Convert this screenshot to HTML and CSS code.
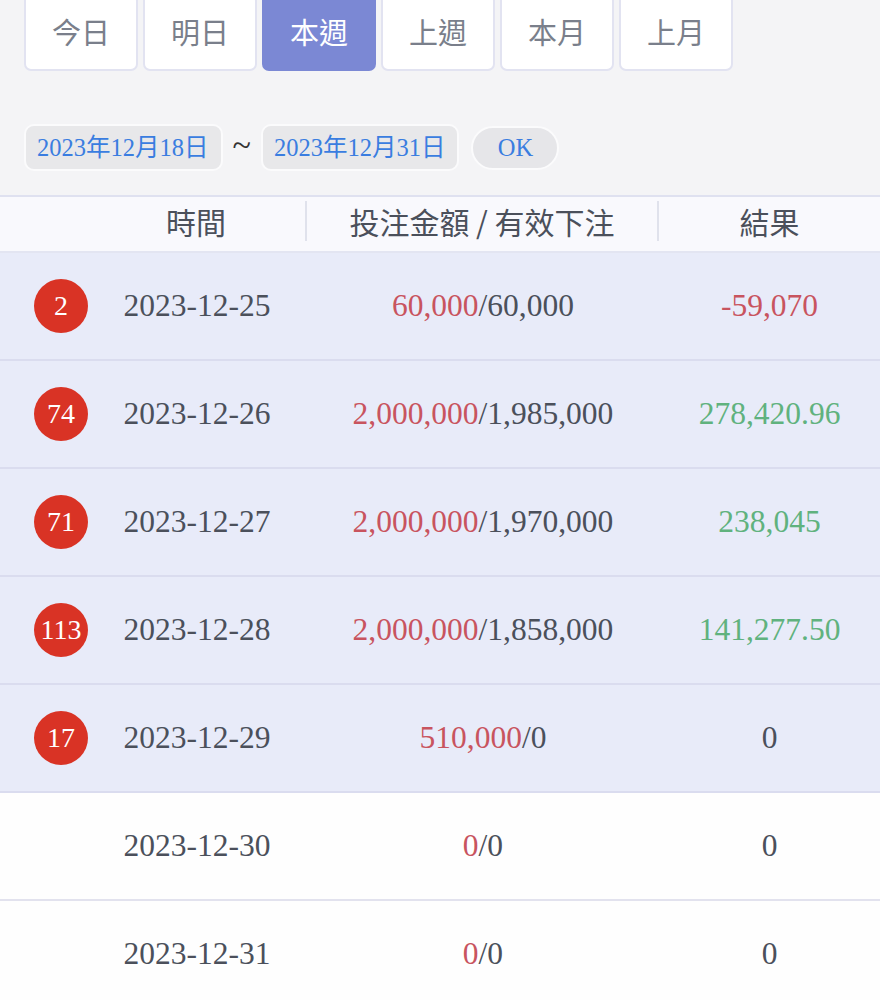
FILE: index.html
```html
<!DOCTYPE html>
<html lang="zh-TW">
<head>
    <meta charset="UTF-8">
    <meta name="viewport" content="width=device-width, initial-scale=1.0">
    <title>投注記錄</title>
    <link rel="stylesheet" href="styles.css">
</head>
<body>
    <div class="filter-panel">
        <div class="tab-bar">
            <button class="tab">今日</button>
            <button class="tab">明日</button>
            <button class="tab active">本週</button>
            <button class="tab">上週</button>
            <button class="tab">本月</button>
            <button class="tab">上月</button>
        </div>

        <div class="date-range">
            <span class="date-chip">2023年12月18日</span>
            <span class="tilde">~</span>
            <span class="date-chip">2023年12月31日</span>
            <button class="ok-button">OK</button>
        </div>
    </div>

    <div class="record-table">
        <div class="table-head">
            <div class="cell"></div>
            <div class="cell head-cell sep">時間</div>
            <div class="cell head-cell sep">投注金額 / 有效下注</div>
            <div class="cell head-cell">結果</div>
        </div>

        <div class="table-row filled">
            <div class="cell"><span class="badge">2</span></div>
            <div class="cell">2023-12-25</div>
            <div class="cell"><span class="red">60,000</span>/60,000</div>
            <div class="cell red">-59,070</div>
        </div>
        <div class="table-row filled">
            <div class="cell"><span class="badge">74</span></div>
            <div class="cell">2023-12-26</div>
            <div class="cell"><span class="red">2,000,000</span>/1,985,000</div>
            <div class="cell green">278,420.96</div>
        </div>
        <div class="table-row filled">
            <div class="cell"><span class="badge">71</span></div>
            <div class="cell">2023-12-27</div>
            <div class="cell"><span class="red">2,000,000</span>/1,970,000</div>
            <div class="cell green">238,045</div>
        </div>
        <div class="table-row filled">
            <div class="cell"><span class="badge">113</span></div>
            <div class="cell">2023-12-28</div>
            <div class="cell"><span class="red">2,000,000</span>/1,858,000</div>
            <div class="cell green">141,277.50</div>
        </div>
        <div class="table-row filled">
            <div class="cell"><span class="badge">17</span></div>
            <div class="cell">2023-12-29</div>
            <div class="cell"><span class="red">510,000</span>/0</div>
            <div class="cell">0</div>
        </div>
        <div class="table-row">
            <div class="cell"></div>
            <div class="cell">2023-12-30</div>
            <div class="cell"><span class="red">0</span>/0</div>
            <div class="cell">0</div>
        </div>
        <div class="table-row">
            <div class="cell"></div>
            <div class="cell">2023-12-31</div>
            <div class="cell"><span class="red">0</span>/0</div>
            <div class="cell">0</div>
        </div>
    </div>
</body>
</html>
```

FILE: styles.css
```css
/* 重置 */
* {
    margin: 0;
    padding: 0;
    box-sizing: border-box;
}

body {
    font-family: "Noto Sans CJK TC", "Noto Sans", sans-serif;
    background: #f4f4f6;
    color: #4b505b;
    width: 880px;
    overflow: hidden;
}

/* 篩選區 */
.filter-panel {
    padding: 0 24px 24px;
}

.tab-bar {
    display: flex;
    gap: 5px;
    margin-top: -6px;
}

.tab {
    width: 114px;
    height: 77px;
    padding-bottom: 4px;
    background: #fff;
    border: 2px solid #e2e3f1;
    border-radius: 7px;
    font-family: "Noto Sans CJK TC", sans-serif;
    font-size: 29px;
    color: #7a7f8b;
}

.tab.active {
    background: #7b88d4;
    border-color: #7b88d4;
    color: #fff;
}

.date-range {
    display: flex;
    align-items: center;
    gap: 10px;
    margin-top: 53px;
}

.date-chip {
    height: 47px;
    line-height: 43px;
    padding: 0 12px 0 11px;
    background: #e8e8ea;
    border: 2px solid #fbfbfc;
    border-radius: 10px;
    font-family: "Liberation Serif", "Noto Sans CJK TC", serif;
    font-size: 24.5px;
    color: #3a7de0;
}

.tilde {
    font-family: "Liberation Serif", serif;
    font-size: 34px;
    line-height: 1;
    color: #333;
    margin-top: -6px;
}

.ok-button {
    width: 88px;
    height: 44px;
    margin-left: 2px;
    background: #e6e6e9;
    border: 2px solid #fbfbfc;
    border-radius: 22px;
    font-family: "Liberation Serif", serif;
    font-size: 24.5px;
    color: #3a7de0;
}

/* 表格 */
.record-table {
    border-top: 2px solid #dfe1f0;
}

.table-head,
.table-row {
    display: grid;
    grid-template-columns: 87px 220px 352px 1fr;
    align-items: center;
}

.table-head {
    height: 56px;
    padding-bottom: 6px;
    background: #f9f9fd;
    border-bottom: 2px solid #e3e5f2;
}

.cell {
    text-align: center;
    font-family: "Liberation Serif", serif;
    font-size: 31.5px;
    white-space: nowrap;
}

.head-cell {
    font-family: "Noto Sans CJK TC", sans-serif;
    font-size: 30px;
    color: #4b505b;
    line-height: 40px;
}

.head-cell.sep {
    border-right: 2px solid #e0e2ec;
}

.table-row {
    height: 108px;
    background: #fefefe;
    border-bottom: 2px solid #e2e2ee;
}

.table-row.filled {
    background: #e8ebf9;
    border-bottom-color: #dadcef;
}

.badge {
    display: flex;
    align-items: center;
    justify-content: center;
    width: 54px;
    height: 54px;
    margin-left: 34px;
    border-radius: 50%;
    background: #d93325;
    color: #fff;
    font-size: 28px;
}

.red {
    color: #c8545f;
}

.green {
    color: #60b27e;
}
```
